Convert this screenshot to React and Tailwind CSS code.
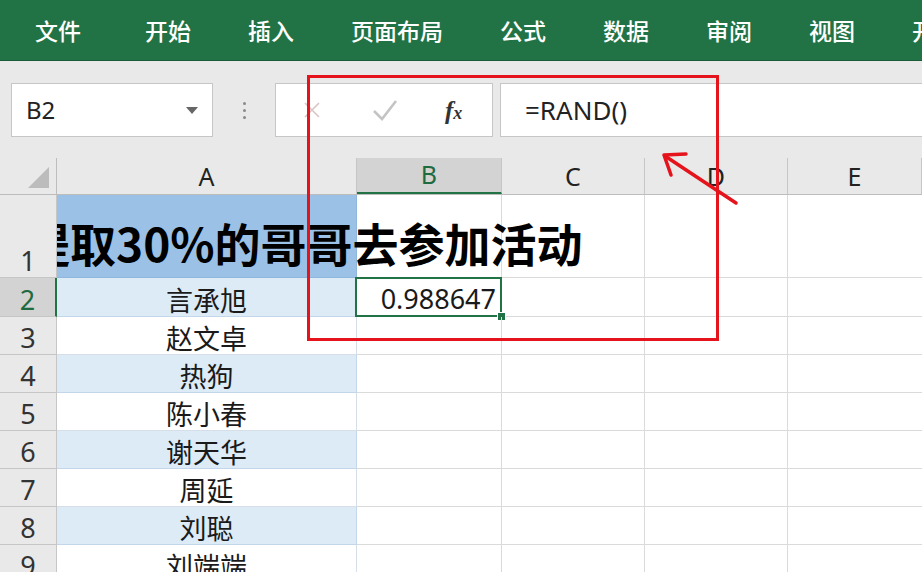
import React from "react";

const tabs = ["文件", "开始", "插入", "页面布局", "公式", "数据", "审阅", "视图", "开"];

// name list in column A, rows 2..9
const names = ["言承旭", "赵文卓", "热狗", "陈小春", "谢天华", "周延", "刘聪", "刘端端"];

const cjk = "font-['Noto_Sans_CJK_SC',sans-serif]";
const latin = "font-['Noto_Sans','Noto_Sans_CJK_SC',sans-serif]";

const colWidths = ["w-[300px]", "w-[145px]", "w-[143px]", "w-[143px]", "flex-1"];

const RowHeader = ({ n, selected, tall }) => (
  <div
    className={`relative z-10 w-[57px] shrink-0 flex items-end justify-center pb-[3px] border-b border-[#c6c6c6] ${
      selected
        ? "bg-[#d3d3d3] text-[#1e6b40] border-r-2 border-r-[#217346]"
        : "bg-[#e9e9e9] text-[#333] border-r border-r-[#c6c6c6]"
    } ${latin} text-[27px] leading-none`}
  >
    {n}
    {tall && null}
  </div>
);

const App = () => {
  return (
    <div className="relative w-[922px] h-[572px] overflow-hidden bg-white">
      {/* Ribbon tabs */}
      <div className={`h-[61px] bg-[#217346] border-b border-[#1a5c37] flex items-center pl-[35px] gap-[57px] ${cjk}`}>
        {tabs.map((t, i) => (
          <span key={t} className={`text-white text-[23px] font-medium whitespace-nowrap ${i === 0 ? "mr-[7px]" : ""}`}>
            {t}
          </span>
        ))}
      </div>

      {/* Formula bar */}
      <div className="h-[97px] bg-[#e9e9e9] flex items-start pt-[22px]">
        <div className="ml-[11px] w-[202px] h-[54px] bg-white border border-[#c6c6c6] flex items-center pl-[14px] pr-[14px]">
          <span className={`${latin} text-[24px] text-[#222] flex-1`}>B2</span>
          <svg width="12" height="7" viewBox="0 0 12 7">
            <path d="M0 0 L12 0 L6 7 Z" fill="#666" />
          </svg>
        </div>
        <div className="w-[62px] h-[54px] flex flex-col items-center justify-center gap-[4px]">
          <span className="w-[3px] h-[3px] rounded-full bg-[#8a8a8a]" />
          <span className="w-[3px] h-[3px] rounded-full bg-[#8a8a8a]" />
          <span className="w-[3px] h-[3px] rounded-full bg-[#8a8a8a]" />
        </div>
        <div className="w-[218px] h-[54px] bg-white border border-[#c6c6c6] flex items-center pl-[26px]">
          <svg width="20" height="20" viewBox="0 0 20 20" className="mr-[50px]">
            <path d="M3 3 L17 17 M17 3 L3 17" stroke="#dcc4c4" strokeWidth="1.6" fill="none" />
          </svg>
          <svg width="26" height="22" viewBox="0 0 26 22" className="mr-[47px]">
            <path d="M2 12 L10 20 L24 2" stroke="#c4c4c4" strokeWidth="2.6" fill="none" />
          </svg>
          <span className="font-['Liberation_Serif',serif] italic text-[#333] leading-none">
            <span className="text-[25px] font-bold">f</span>
            <span className="text-[18px] font-bold">x</span>
          </span>
        </div>
        <div className="ml-[7px] flex-1 h-[54px] bg-white border border-[#c6c6c6] border-r-0 flex items-center pl-[24px]">
          <span className={`${latin} text-[26px] text-[#222]`}>=RAND()</span>
        </div>
      </div>

      {/* Column headers */}
      <div className={`h-[37px] flex bg-[#e9e9e9] border-b border-[#bdbdbd] ${latin} text-[25px] leading-none text-[#222]`}>
        <div className="w-[57px] shrink-0 border-r border-[#bdbdbd] flex items-end justify-end pr-[7px] pb-[6px]">
          <svg width="21" height="21" viewBox="0 0 21 21">
            <path d="M21 0 L21 21 L0 21 Z" fill="#bcbcbc" />
          </svg>
        </div>
        {["A", "B", "C", "D", "E"].map((c, i) => (
          <div
            key={c}
            className={`${colWidths[i]} shrink-0 flex items-end justify-center pb-[5px] border-r border-[#c6c6c6] ${
              c === "B" ? "bg-[#d3d3d3] text-[#1e6b40] border-b-2 border-b-[#217346]" : ""
            }`}
          >
            {c}
          </div>
        ))}
      </div>

      {/* Row 1 with title */}
      <div className="h-[83px] flex">
        <RowHeader n={1} tall />
        <div className="relative w-[300px] shrink-0 bg-[#9bc2e6] border-r border-b border-[#8fb6dc]">
          <span
            className={`absolute left-[-33px] top-[24px] whitespace-nowrap ${cjk} font-bold text-[46px] leading-none text-black`}
          >
            提取30%的哥哥去参加活动
          </span>
        </div>
        <div className="w-[145px] shrink-0 border-r border-b border-[#dadada]" />
        <div className="w-[143px] shrink-0 border-r border-b border-[#dadada]" />
        <div className="w-[143px] shrink-0 border-r border-b border-[#dadada]" />
        <div className="flex-1 border-b border-[#dadada]" />
      </div>

      {/* Rows 2..9 */}
      {names.map((name, i) => {
        const row = i + 2;
        const shaded = row % 2 === 0;
        return (
          <div key={row} className={`${row === 2 ? "h-[39px]" : "h-[38px]"} flex`}>
            <RowHeader n={row} selected={row === 2} />
            <div
              className={`w-[300px] shrink-0 flex items-end justify-center pb-[3px] border-r border-b ${
                shaded ? "bg-[#ddebf7] border-[#c3d6ea]" : "bg-white border-[#d6dfe8]"
              } ${cjk} text-[27px] leading-none text-[#1a1a1a]`}
            >
              {name}
            </div>
            <div className="relative w-[145px] shrink-0 border-r border-b border-[#dadada] flex items-end justify-end pr-[5px] pb-[4px]">
              {row === 2 && (
                <>
                  <span className={`${latin} text-[27px] leading-none text-[#1a1a1a]`}>0.988647</span>
                  <div className="absolute left-[-2px] top-[-1px] right-[-1px] bottom-[-1px] border-2 border-[#217346]" />
                  <div className="absolute right-[-5px] bottom-[-5px] w-[9px] h-[9px] bg-[#217346] border border-white" />
                </>
              )}
            </div>
            <div className="w-[143px] shrink-0 border-r border-b border-[#dadada]" />
            <div className="w-[143px] shrink-0 border-r border-b border-[#dadada]" />
            <div className="flex-1 border-b border-[#dadada]" />
          </div>
        );
      })}

      {/* Red annotation box and arrow */}
      <div className="absolute left-[307px] top-[75px] w-[412px] h-[266px] border-[3px] border-[#e5131b]" />
      <svg className="absolute left-0 top-0" width="922" height="572" viewBox="0 0 922 572">
        <path d="M736 203 L665 156" stroke="#e5131b" strokeWidth="3.5" fill="none" strokeLinecap="round" />
        <path d="M686 154 L664 155 L671 175" stroke="#e5131b" strokeWidth="3.5" fill="none" strokeLinecap="round" strokeLinejoin="round" />
      </svg>
    </div>
  );
};

export default App;
